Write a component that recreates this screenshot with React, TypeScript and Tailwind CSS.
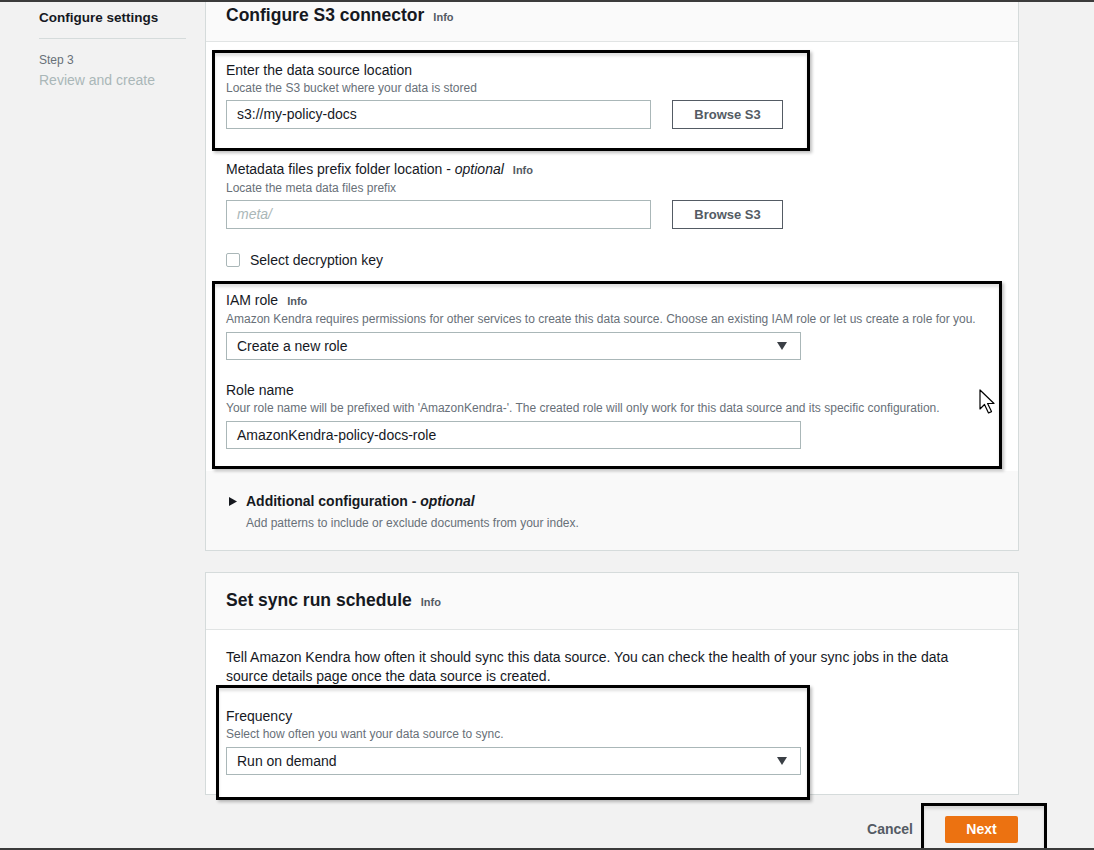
import React from 'react';

const FONT = "font-['Liberation_Sans',Arial,sans-serif]";

function Info() {
  return <span className="ml-[9px] text-[11px] font-bold text-[#545b64]">Info</span>;
}

function Caret() {
  return (
    <svg width="10" height="8" viewBox="0 0 10 8" className="shrink-0">
      <polygon points="0,0 10,0 5,8" fill="#3a3f45" />
    </svg>
  );
}

function Label({ children }: { children: React.ReactNode }) {
  return <div className="text-[14px] leading-[20px] text-[#16191f]">{children}</div>;
}

function Desc({ children }: { children: React.ReactNode }) {
  return <div className="text-[12px] leading-[16px] text-[#687078]">{children}</div>;
}

function TextInput({ value, placeholder, width, height = 'h-[29px]' }: { value?: string; placeholder?: string; width: string; height?: string }) {
  return (
    <div className={`${width} ${height} border border-[#aab7b8] bg-white flex items-center px-[10px] text-[14px]`}>
      {value ? (
        <span className="text-[#16191f]">{value}</span>
      ) : (
        <span className="italic text-[#aab7b8]">{placeholder}</span>
      )}
    </div>
  );
}

function Select({ value }: { value: string }) {
  return (
    <div className="w-[575px] h-[28px] border border-[#aab7b8] bg-white flex items-center justify-between pl-[10px] pr-[13px] text-[14px]">
      <span>{value}</span>
      <Caret />
    </div>
  );
}

function BrowseButton() {
  return (
    <button className="ml-[21px] w-[111px] h-[29px] border border-[#545b64] bg-white text-[13px] font-bold text-[#545b64]">
      Browse S3
    </button>
  );
}

// annotation frame drawn around the highlighted fields
const FRAME = 'relative border-[3px] border-black bg-white shadow-[inset_0_3px_3px_rgba(0,0,0,0.12),2px_2px_3px_rgba(0,0,0,0.25)]';

function Cursor() {
  return (
    <svg width="19" height="26" viewBox="0 0 19 26" className="absolute left-[979px] top-[389px]">
      <path d="M1 1 V20 L5.5 15.5 L9.5 24 L12.5 22.6 L8.6 14.5 H15 Z" fill="white" stroke="black" strokeWidth="1.2" strokeLinejoin="round" />
    </svg>
  );
}

export default function App() {
  return (
    <div className={`${FONT} relative w-[1094px] h-[850px] overflow-hidden bg-[#f2f2f2] text-[#16191f] flex flex-col`}>
      <div className="h-[2px] shrink-0 bg-[#3c3c3c]" />
      <div className="flex flex-1 min-h-0">
        <aside className="w-[205px] shrink-0 pl-[39px] pr-[19px] pt-[6px]">
          <div className="text-[13.5px] leading-[20px] font-bold text-[#16191f]">Configure settings</div>
          <div className="mt-[10px] border-t border-[#d5dbdb]" />
          <div className="mt-[13px] text-[12px] leading-[16px] text-[#687078]">Step 3</div>
          <div className="mt-[2px] text-[14px] leading-[20px] text-[#aab7b8]">Review and create</div>
        </aside>

        <main className="w-[814px] shrink-0 flex flex-col">
          <section className="border-x border-b border-[#d5dbdb] bg-white">
            <header className="h-[40px] pt-[1px] px-[20px] bg-[#fafafa] border-b border-[#e1e4e4] flex items-baseline">
              <h2 className="text-[17.5px] leading-[24px] font-bold">Configure S3 connector</h2>
              <Info />
            </header>

            <div className="px-[20px] pt-[8px] pb-[2px]">
              <div className={`${FRAME} -ml-[14px] w-[598px] pl-[11px] pt-[7px] pb-[19px]`}>
                <Label>Enter the data source location</Label>
                <Desc>Locate the S3 bucket where your data is stored</Desc>
                <div className="mt-[4px] flex">
                  <TextInput value="s3://my-policy-docs" width="w-[425px]" />
                  <BrowseButton />
                </div>
              </div>

              <div className="mt-[8px]">
                <Label>
                  Metadata files prefix folder location - <i>optional</i>
                  <Info />
                </Label>
                <Desc>Locate the meta data files prefix</Desc>
                <div className="mt-[4px] flex">
                  <TextInput placeholder="meta/" width="w-[425px]" />
                  <BrowseButton />
                </div>
              </div>

              <div className="mt-[21px] flex items-center h-[20px]">
                <div className="w-[14px] h-[14px] border border-[#aab7b8] rounded-[2px] bg-white" />
                <span className="ml-[10px] text-[14px]">Select decryption key</span>
              </div>

              <div className={`${FRAME} mt-[11px] -ml-[14px] w-[790px] pl-[11px] pt-[6px] pb-[17px]`}>
                <Label>
                  IAM role
                  <Info />
                </Label>
                <Desc>
                  Amazon Kendra requires permissions for other services to create this data source. Choose an existing IAM role or let us create a role for you.
                </Desc>
                <div className="mt-[5px]">
                  <Select value="Create a new role" />
                </div>
                <div className="mt-[20px]">
                  <Label>Role name</Label>
                </div>
                <Desc>
                  Your role name will be prefixed with 'AmazonKendra-'. The created role will only work for this data source and its specific configuration.
                </Desc>
                <div className="mt-[5px]">
                  <TextInput value="AmazonKendra-policy-docs-role" width="w-[575px]" height="h-[28px]" />
                </div>
              </div>
            </div>

            <div className="bg-[#f9f9f9] px-[20px] pt-[20px] pb-[19px]">
              <div className="flex items-center h-[20px]">
                <svg width="8" height="9" viewBox="0 0 8 9" className="ml-[3px]">
                  <polygon points="0,0 8,4.5 0,9" fill="#16191f" />
                </svg>
                <span className="ml-[9px] text-[14px] font-bold text-[#16191f]">
                  Additional configuration - <i>optional</i>
                </span>
              </div>
              <div className="mt-[4px] pl-[20px] text-[12px] leading-[16px] text-[#687078]">
                Add patterns to include or exclude documents from your index.
              </div>
            </div>
          </section>

          <section className="mt-[21px] border border-[#d5dbdb] bg-white">
            <header className="h-[57px] pt-[15px] px-[20px] bg-[#fafafa] border-b border-[#e1e4e4] flex items-baseline">
              <h2 className="text-[17.5px] leading-[24px] font-bold">Set sync run schedule</h2>
              <Info />
            </header>
            <div className="px-[20px] pt-[18px]">
              <p className="text-[14px] leading-[19px] text-[#16191f] pr-[40px]">
                Tell Amazon Kendra how often it should sync this data source. You can check the health of your sync jobs in the data source details page once the data source is created.
              </p>
              <div className={`${FRAME} z-10 -mt-[1px] -mb-[6px] -ml-[10px] w-[594px] pl-[7px] pt-[18px] pb-[22px]`}>
                <Label>Frequency</Label>
                <Desc>Select how often you want your data source to sync.</Desc>
                <div className="mt-[5px]">
                  <Select value="Run on demand" />
                </div>
              </div>
            </div>
          </section>

          <div className="mt-[8px] flex justify-end items-start -mr-[28px]">
            <span className="mt-[13px] h-[27px] flex items-center text-[14px] font-bold text-[#545b64]">Cancel</span>
            <div className="ml-[8px] h-[48px] border-[3px] border-b-0 border-black bg-[#f2f2f2] pl-[21px] pr-[26px] pt-[10px] shadow-[inset_0_3px_3px_rgba(0,0,0,0.12)]">
              <button className="w-[73px] h-[27px] rounded-[2px] bg-[#ec7211] text-white text-[14px] font-bold">Next</button>
            </div>
          </div>
        </main>
      </div>
      <div className="h-[2px] shrink-0 bg-[#3c3c3c]" />
      <Cursor />
    </div>
  );
}
